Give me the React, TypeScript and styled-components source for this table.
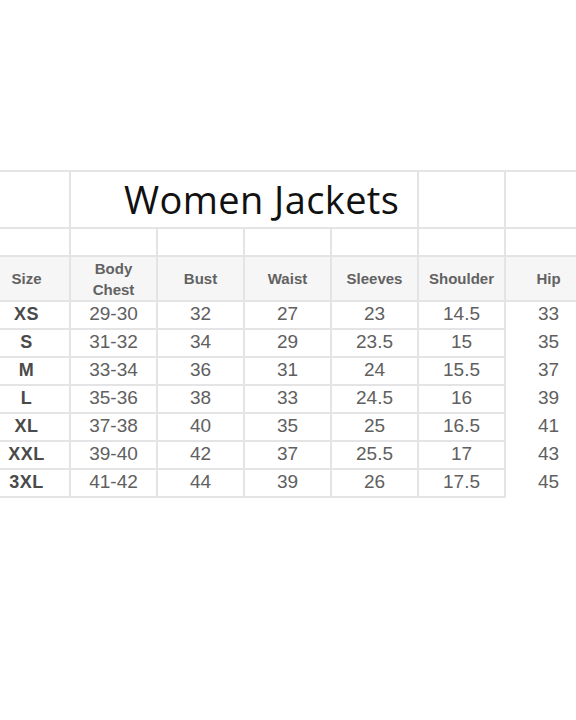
import styled, { createGlobalStyle } from 'styled-components'

const GlobalStyle = createGlobalStyle`
  html, body {
    margin: 0;
    padding: 0;
    background: #ffffff;
  }
  body {
    font-family: 'Liberation Sans', Arial, sans-serif;
    overflow: hidden;
  }
`

type Row = {
  size: string
  chest: string
  bust: string
  waist: string
  sleeves: string
  shoulder: string
  hip: string
}

const rows: Row[] = [
  { size: 'XS', chest: '29-30', bust: '32', waist: '27', sleeves: '23', shoulder: '14.5', hip: '33' },
  { size: 'S', chest: '31-32', bust: '34', waist: '29', sleeves: '23.5', shoulder: '15', hip: '35' },
  { size: 'M', chest: '33-34', bust: '36', waist: '31', sleeves: '24', shoulder: '15.5', hip: '37' },
  { size: 'L', chest: '35-36', bust: '38', waist: '33', sleeves: '24.5', shoulder: '16', hip: '39' },
  { size: 'XL', chest: '37-38', bust: '40', waist: '35', sleeves: '25', shoulder: '16.5', hip: '41' },
  { size: 'XXL', chest: '39-40', bust: '42', waist: '37', sleeves: '25.5', shoulder: '17', hip: '43' },
  { size: '3XL', chest: '41-42', bust: '44', waist: '39', sleeves: '26', shoulder: '17.5', hip: '45' },
]

const headers = ['Size', 'Body\nChest', 'Bust', 'Waist', 'Sleeves', 'Shoulder', 'Hip']

const App = () => {
  return (
    <Page>
      <GlobalStyle />
      <Chart>
        <colgroup>
          {headers.map((h) => (
            <col key={h} />
          ))}
        </colgroup>
        <tbody>
          <TitleRow>
            <Cell />
            <TitleCell colSpan={4}>Women Jackets</TitleCell>
            <Cell />
            <Cell />
          </TitleRow>
          <SpacerRow>
            {headers.map((h) => (
              <Cell key={h} />
            ))}
          </SpacerRow>
          <HeadRow>
            {headers.map((h) => (
              <HeadCell key={h}>{h}</HeadCell>
            ))}
          </HeadRow>
          {rows.map((r) => (
            <DataRow key={r.size}>
              <SizeCell>{r.size}</SizeCell>
              <Cell>{r.chest}</Cell>
              <Cell>{r.bust}</Cell>
              <Cell>{r.waist}</Cell>
              <Cell>{r.sleeves}</Cell>
              <Cell>{r.shoulder}</Cell>
              <Cell $bare>{r.hip}</Cell>
            </DataRow>
          ))}
        </tbody>
      </Chart>
    </Page>
  )
}

export default App

const Page = styled.div`
  width: 576px;
  height: 720px;
  padding-top: 170px;
  box-sizing: border-box;
  overflow: hidden;
`

const Chart = styled.table`
  margin-left: -18px;
  border-collapse: collapse;
  table-layout: fixed;
  width: 609px;
  col {
    width: 87px;
  }
`

const Cell = styled.td<{ $bare?: boolean }>`
  border: 2px solid ${(p) => (p.$bare ? 'transparent' : '#e4e4e6')};
  padding: 0 0 3px;
  text-align: center;
  vertical-align: middle;
  font-size: 19px;
  color: #606060;
  line-height: 1;
`

const TitleRow = styled.tr`
  height: 57px;
`

const TitleCell = styled.td`
  border: 2px solid #e4e4e6;
  padding: 0 0 2px 53px;
  text-align: left;
  vertical-align: middle;
  font-family: 'Open Sans', sans-serif;
  font-size: 38px;
  letter-spacing: 0.4px;
  color: #111111;
  line-height: 1;
`

const SpacerRow = styled.tr`
  height: 28px;
`

const HeadRow = styled.tr`
  height: 45px;
  background: #f6f6f6;
`

const HeadCell = styled.td`
  border: 2px solid #e4e4e6;
  padding: 0;
  text-align: center;
  vertical-align: middle;
  font-size: 15px;
  font-weight: bold;
  color: #626262;
  line-height: 21px;
  white-space: pre-line;
`

const DataRow = styled.tr`
  height: 28px;
`

const SizeCell = styled(Cell)`
  font-weight: bold;
  font-size: 18px;
  color: #4a4a4a;
  letter-spacing: 0.5px;
`
